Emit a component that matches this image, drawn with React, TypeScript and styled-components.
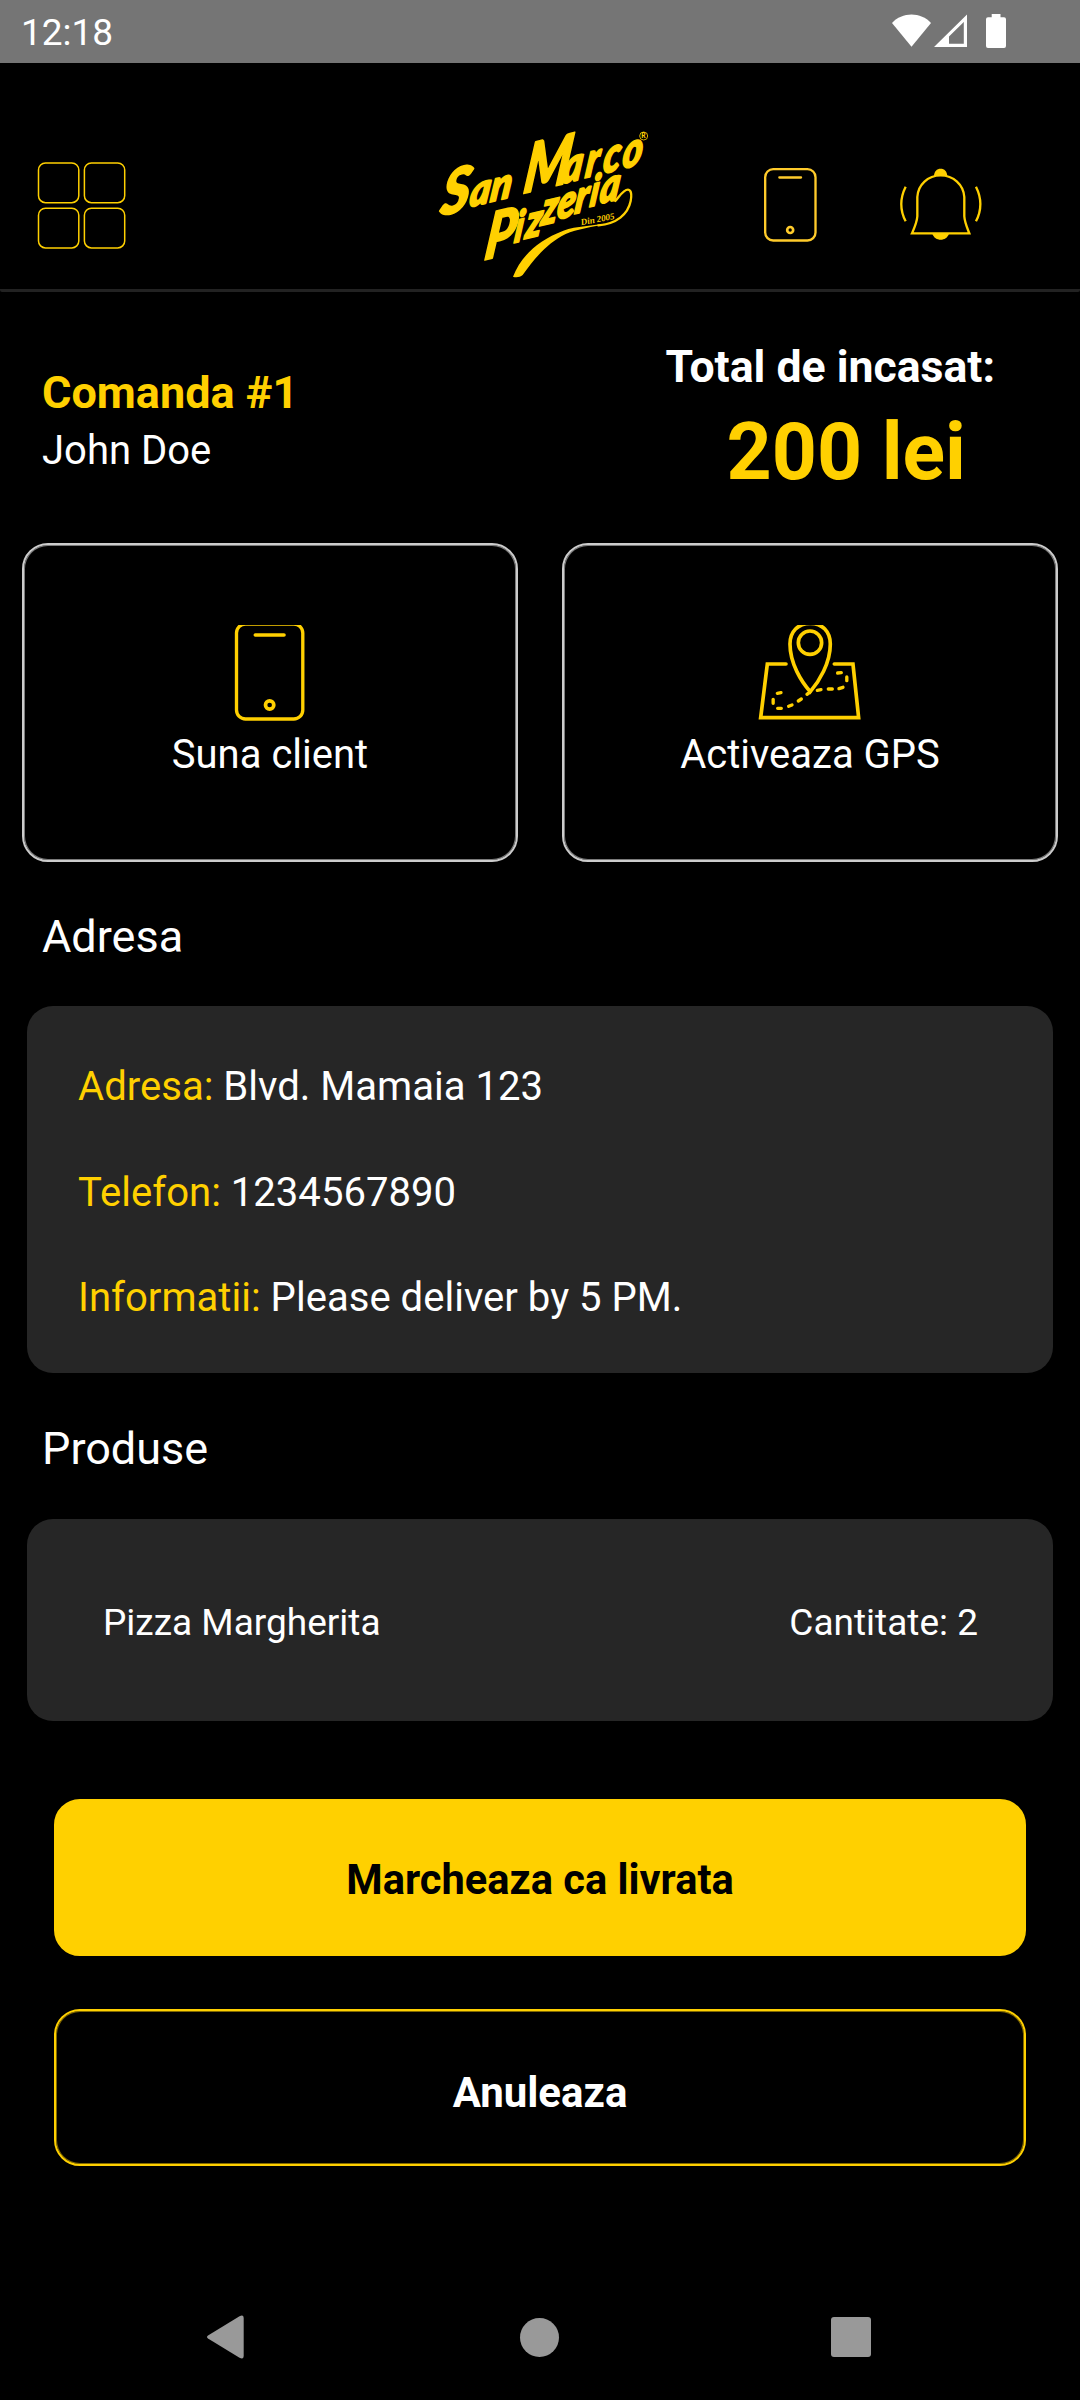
import React from "react";
import styled, { createGlobalStyle, css } from "styled-components";

const yellow = "#ffd000";

const GlobalStyle = createGlobalStyle`
  *, *::before, *::after { box-sizing: border-box; }
  body { margin: 0; background: #000; }
`;

const Screen = styled.div`
  width: 1080px;
  height: 2400px;
  display: flex;
  flex-direction: column;
  background: #000;
  color: #fff;
  font-family: Roboto, "Noto Sans", sans-serif;
  overflow: hidden;
`;

const StatusBar = styled.div`
  height: 63px;
  flex: none;
  display: flex;
  align-items: flex-start;
  justify-content: space-between;
  padding: 0 70px 0 21px;
  background: #757575;
`;

const Clock = styled.span`
  font-size: 37px;
  line-height: 66px;
`;

const StatusIcons = styled.svg`
  width: 124px;
  height: 63px;
`;

const Header = styled.header`
  height: 229px;
  flex: none;
  display: flex;
  align-items: center;
  padding: 58px 0 0 37px;
  border-bottom: 3px solid #222;
  border-radius: 2px;
`;

const HeaderIcon = styled.svg<{ $w: number; $h: number; $gap?: number }>`
  flex: none;
  width: ${(p) => p.$w}px;
  height: ${(p) => p.$h}px;
  margin-left: ${(p) => p.$gap ?? 0}px;
  overflow: visible;
`;

const Summary = styled.section`
  height: 251px;
  flex: none;
  display: flex;
  justify-content: space-between;
  padding: 46px 85px 0 42px;
`;

const Customer = styled.div`
  padding-top: 26px;
`;

const Total = styled.div`
  text-align: center;
`;

const OrderTitle = styled.h1<{ $accent?: boolean }>`
  margin: 0;
  font-size: ${(p) => (p.$accent ? 45 : 44.6)}px;
  line-height: 58px;
  font-weight: 700;
  color: ${(p) => (p.$accent ? yellow : "#fff")};
`;

const CustomerName = styled.div`
  font-size: 40px;
  line-height: 58px;
`;

const Price = styled.div`
  padding-left: 32px;
  font-size: 78.75px;
  line-height: 112px;
  font-weight: 700;
  color: ${yellow};
`;

const Actions = styled.section`
  flex: none;
  display: grid;
  grid-template-columns: 496px 496px;
  column-gap: 44px;
  padding: 0 22px;
`;

const ActionCard = styled.button`
  height: 319px;
  display: flex;
  flex-direction: column;
  align-items: center;
  justify-content: flex-start;
  gap: 11px;
  padding: 80px 0 0;
  border: 2px solid #ccc;
  border-radius: 26px;
  box-shadow: inset 0 0 0 1px rgba(204, 204, 204, 0.6);
  background: transparent;
  color: #fff;
  font: inherit;
  font-size: 40px;
  line-height: 46px;
`;

const ActionIcon = styled.svg<{ $w: number }>`
  flex: none;
  width: ${(p) => p.$w}px;
  height: 96px;
  overflow: hidden;
`;

const SectionTitle = styled.h2<{ $height: number }>`
  flex: none;
  height: ${(p) => p.$height}px;
  display: flex;
  align-items: center;
  margin: 0;
  padding: 4px 42px 0;
  font-size: 45px;
  font-weight: 400;
`;

const Panel = styled.section`
  flex: none;
  margin: 0 27px;
  border-radius: 26px;
  background: #262626;
`;

const AddressPanel = styled(Panel)`
  height: 367px;
  padding: 28px 51px;
`;

const Detail = styled.div`
  font-size: 40.1px;
  line-height: 105.5px;
  white-space: pre;
`;

const DetailLabel = styled.span`
  color: ${yellow};
`;

const ProductPanel = styled(Panel)`
  height: 202px;
  display: flex;
  align-items: center;
  justify-content: space-between;
  padding: 4px 75px 0 76px;
  font-size: 37px;
`;

const Buttons = styled.section`
  flex: none;
  display: flex;
  flex-direction: column;
  gap: 53.5px;
  padding: 78px 54px 0;
`;

const Button = styled.button<{ $outline?: boolean }>`
  height: 156.5px;
  border: 2px solid ${yellow};
  border-radius: 26px;
  font: inherit;
  font-weight: 700;
  ${(p) =>
    p.$outline
      ? css`
          padding: 11px 0 0;
          font-size: 42px;
          background: transparent;
          color: #fff;
          box-shadow: inset 0 0 0 1px rgba(255, 208, 0, 0.5);
        `
      : css`
          padding: 4px 0 0;
          font-size: 41.6px;
          background: ${yellow};
          color: #000;
        `}
`;

const NavBar = styled.nav`
  flex: none;
  height: 126px;
  margin-top: auto;
  display: flex;
  align-items: center;
  justify-content: space-between;
  padding: 0 209px 0 206px;
`;

const NavBack = styled.svg`
  width: 42px;
  height: 44px;
`;

const NavHome = styled.span`
  width: 39px;
  height: 39px;
  border-radius: 50%;
  background: #999;
`;

const NavRecent = styled.span`
  width: 40px;
  height: 40px;
  border-radius: 3px;
  background: #999;
`;

type Letter = [ch: string, x: number, y: number, size: number];

const RISE = 0.24;
const SLANT = -0.14;

/* A word of the logo: each letter has its own size and baseline, and the word climbs to the right. */
function LogoWord({ letters, squeeze }: { letters: Letter[]; squeeze: number }) {
  return (
    <text transform={`matrix(${squeeze} ${-RISE * squeeze} ${SLANT} 1 0 0)`}>
      {letters.map(([ch, x, y, size], i) => {
        const v = (y + RISE * x) / (1 + RISE * SLANT);
        return (
          <tspan key={i} x={(x - SLANT * v) / squeeze} y={v} fontSize={size}>
            {ch}
          </tspan>
        );
      })}
    </text>
  );
}

const SAN: Letter[] = [
  ["S", 58, 318, 188],
  ["a", 146, 291, 132],
  ["n", 208, 276, 132],
];
const MARCO: Letter[] = [
  ["M", 306, 250, 208],
  ["a", 424, 221, 148],
  ["r", 493, 203, 148],
  ["c", 546, 190, 148],
  ["o", 604, 176, 148],
];
const PIZZERIA: Letter[] = [
  ["P", 190, 450, 196],
  ["i", 280, 398, 132],
  ["z", 313, 386, 142],
  ["z", 360, 346, 142],
  ["e", 408, 328, 142],
  ["r", 461, 311, 142],
  ["i", 506, 290, 132],
  ["a", 536, 281, 142],
];

function Logo() {
  return (
    <HeaderIcon $w={220} $h={156.7} $gap={304} viewBox="30 50 660 470">
      <g fill={yellow} fontFamily="Lato, sans-serif" fontWeight={900} fontStyle="italic">
        <g stroke={yellow} strokeWidth="6" strokeLinejoin="round">
          <LogoWord letters={SAN} squeeze={0.88} />
          <LogoWord letters={MARCO} squeeze={0.76} />
          <LogoWord letters={PIZZERIA} squeeze={0.78} />
        </g>
        <text x="484" y="345" fontSize="27" transform="rotate(-11 484 345)" fontFamily="Liberation Serif, serif" fontWeight={700}>
          Din 2005
        </text>
        <text x="664" y="84" fontSize="20" fontStyle="normal">R</text>
      </g>
      <circle cx="671" cy="77" r="12" fill="none" stroke={yellow} strokeWidth="2.5" />
      <path
        fill={yellow}
        d="M279 499C302 440 352 390 430 361C470 347 520 347 560 339C520 351 470 356 437 371C387 395 346 440 308 494C300 501 288 502 279 499Z"
      />
      <path
        fill="none"
        stroke={yellow}
        strokeWidth="7"
        strokeLinecap="round"
        d="M535 345C590 340 624 312 632 272C638 240 628 231 612 243C600 252 594 264 586 272"
      />
    </HeaderIcon>
  );
}

function App() {
  return (
    <>
      <GlobalStyle />
      <Screen>
        <StatusBar>
          <Clock>12:18</Clock>
          <StatusIcons viewBox="886 0 124 63" fill="#fff">
            <path d="M892 23C902 11.500 921 11.500 931 23L911.500 46.700Z" />
            <path fillRule="evenodd" d="M934 47L967 14.500V47ZM949 36.500V43.800H963.800V22Z" />
            <path d="M991.700 14H1000.500V17.300H1004Q1006 17.300 1006 19.300V46Q1006 48 1004 48H988Q986 48 986 46V19.300Q986 17.300 988 17.300H991.700Z" />
          </StatusIcons>
        </StatusBar>

        <Header>
          <HeaderIcon $w={89} $h={87} viewBox="37 161.500 89 87" fill="none" stroke={yellow} strokeWidth="1.500">
            <rect x="38.500" y="162.500" width="40.300" height="39.700" rx="7" />
            <rect x="84.400" y="162.500" width="40.300" height="39.700" rx="7" />
            <rect x="38.500" y="207.700" width="40.300" height="39.700" rx="7" />
            <rect x="84.400" y="207.700" width="40.300" height="39.700" rx="7" />
          </HeaderIcon>
          <Logo />
          <HeaderIcon $w={54.7} $h={76} $gap={113.3} viewBox="130 501 164 228" fill="none" stroke="#ffcb2b" strokeWidth="7">
            <rect x="136.500" y="507.500" width="151" height="214" rx="24" />
            <path d="M179 532.500H244" strokeLinecap="round" />
            <circle cx="211.500" cy="690" r="9" strokeWidth="8" />
          </HeaderIcon>
          <HeaderIcon $w={85.3} $h={77.3} $gap={80.3} viewBox="535 499 256 232" fill="none" stroke={yellow} strokeWidth="7">
            <path d="M577 701C586 681 592 668 593 650V592C595 555 625 527 663 527C701 527 732 555 734 592V650C735 668 741 681 749 701Z" />
            <path d="M558 561C541 595 541 632 558 665M769 561C786 595 786 632 769 665" />
            <path fill={yellow} stroke="none" d="M643 531C643 515 652 507 663 507C674 507 683 515 683 531C670 526 656 526 643 531Z" />
            <path fill={yellow} stroke="none" d="M638 702C642 714 652 720 663 720C674 720 684 714 688 702Z" />
          </HeaderIcon>
        </Header>

        <Summary>
          <Customer>
            <OrderTitle $accent>Comanda #1</OrderTitle>
            <CustomerName>John Doe</CustomerName>
          </Customer>
          <Total>
            <OrderTitle as="div">Total de incasat:</OrderTitle>
            <Price>200 lei</Price>
          </Total>
        </Summary>

        <Actions>
          <ActionCard>
            <ActionIcon $w={73.3} viewBox="220 75 220 288" fill="none" stroke={yellow} strokeWidth="10">
              <rect x="230.500" y="72" width="199" height="285" rx="27" />
              <path d="M287 105H373" strokeWidth="11" strokeLinecap="round" />
              <circle cx="330" cy="315" r="12.500" strokeWidth="11" />
            </ActionIcon>
            Suna client
          </ActionCard>
          <ActionCard>
            <ActionIcon $w={103.3} viewBox="295 75 310 288" fill="none" stroke={yellow} strokeWidth="11" strokeLinecap="round">
              <path d="M379 192H323L303 353H597L580 192H524" />
              <path d="M452 275C425 245 391 190 391 132C391 95 415 70 452 70C488 70 512 95 512 132C512 190 478 245 452 275Z" />
              <circle cx="451" cy="128" r="35" />
              <path
                strokeWidth="10"
                d="M353 280L364 278M340.500 298V310M354 325H365M387 319L397 315M416 303L425 297M442 283L450 277M473 271L484 269M506 267H518M538 266L550 262M561.500 242V231M534 219L545 218"
              />
            </ActionIcon>
            Activeaza GPS
          </ActionCard>
        </Actions>

        <SectionTitle $height={144}>Adresa</SectionTitle>
        <AddressPanel>
          <Detail><DetailLabel>Adresa:</DetailLabel> Blvd. Mamaia 123</Detail>
          <Detail><DetailLabel>Telefon:</DetailLabel> 1234567890</Detail>
          <Detail><DetailLabel>Informatii:</DetailLabel> Please deliver by 5 PM.</Detail>
        </AddressPanel>

        <SectionTitle $height={146}>Produse</SectionTitle>
        <ProductPanel>
          <span>Pizza Margherita</span>
          <span>Cantitate: 2</span>
        </ProductPanel>

        <Buttons>
          <Button>Marcheaza ca livrata</Button>
          <Button $outline>Anuleaza</Button>
        </Buttons>

        <NavBar>
          <NavBack viewBox="206 2315 42 44" fill="#999">
            <path d="M208 2335.500L239.500 2316.300Q243.700 2314 243.700 2318.500V2355.500Q243.700 2360 239.500 2357.700L208 2338.500Q206 2337 208 2335.500Z" />
          </NavBack>
          <NavHome />
          <NavRecent />
        </NavBar>
      </Screen>
    </>
  );
}

export default App;
